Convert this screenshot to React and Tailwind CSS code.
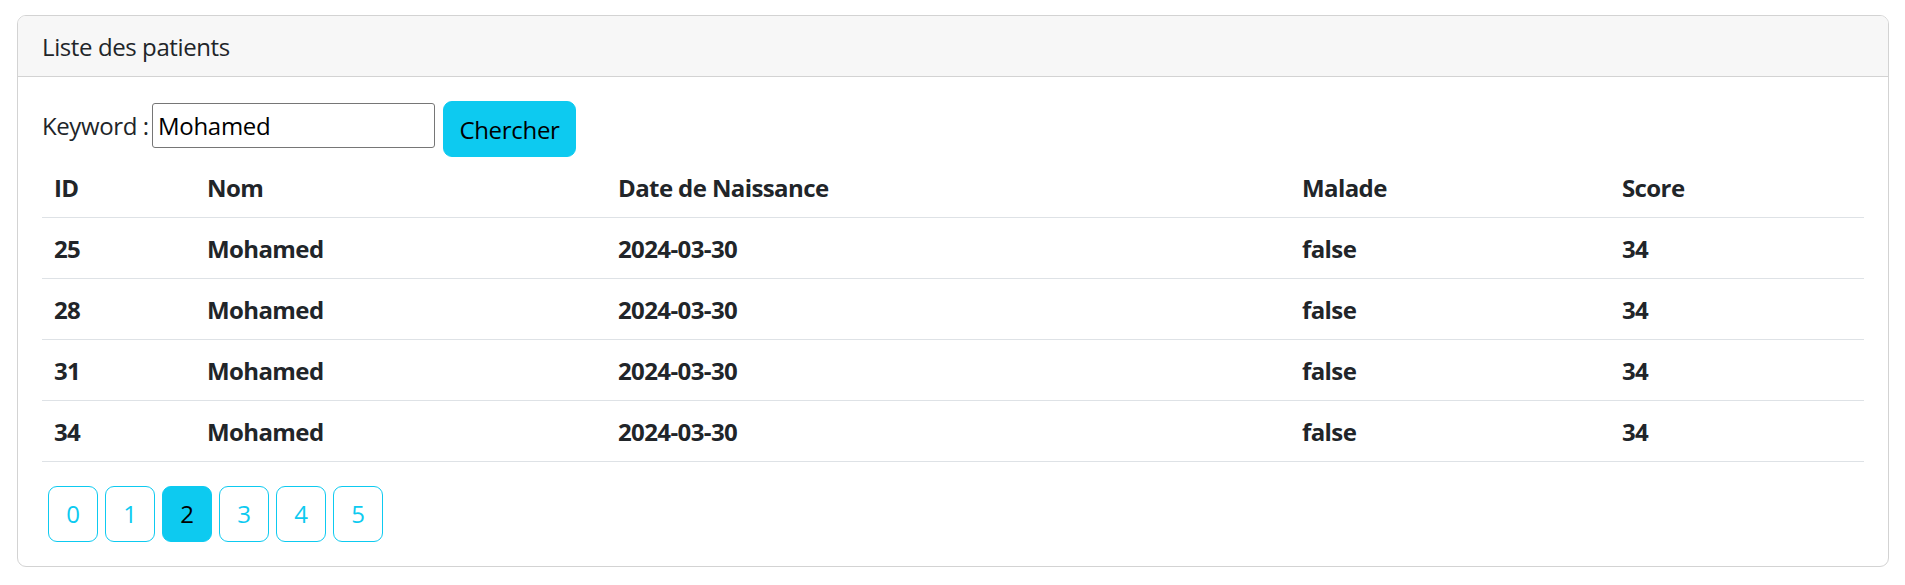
import React from "react";

const patients = [
    { id: 25, nom: "Mohamed", dateNaissance: "2024-03-30", malade: "false", score: 34 },
    { id: 28, nom: "Mohamed", dateNaissance: "2024-03-30", malade: "false", score: 34 },
    { id: 31, nom: "Mohamed", dateNaissance: "2024-03-30", malade: "false", score: 34 },
    { id: 34, nom: "Mohamed", dateNaissance: "2024-03-30", malade: "false", score: 34 },
];

const pages = [0, 1, 2, 3, 4, 5];
const currentPage = 2;

export default function App() {
    return (
        <div
            className="min-h-[585px] bg-white pt-[15px] pl-[17px] pr-[16px] text-[#212529]"
            style={{ fontFamily: '"Open Sans", "Noto Sans", sans-serif' }}
        >
            <div className="rounded-[9px] border border-[#d3d3d3] overflow-hidden">
                <div className="h-[61px] bg-[#f7f7f7] border-b border-[#d3d3d3] px-[24px] pt-[2px] flex items-center text-[24px] leading-[36px] tracking-[-0.4px]">
                    Liste des patients
                </div>
                <div className="p-[24px]">
                    <form className="flex items-start h-[56px]" onSubmit={(e) => e.preventDefault()}>
                        <label className="w-[110px] mt-[7px] text-[24px] leading-[36px] tracking-[-0.4px] whitespace-nowrap">
                            Keyword :
                        </label>
                        <input
                            type="text"
                            defaultValue="Mohamed"
                            className="mt-[2px] w-[283px] h-[45px] px-[5px] border border-[#767676] rounded-[3px] text-[24px] tracking-[-0.3px] text-black bg-white outline-none"
                        />
                        <button
                            type="submit"
                            className="ml-[8px] w-[133px] h-[56px] pt-[1px] rounded-[9px] bg-[#0dcaf0] border border-[#0dcaf0] text-[24px] leading-[36px] tracking-[-0.3px] text-black flex items-center justify-center"
                        >
                            Chercher
                        </button>
                    </form>
                    <table className="w-full table-fixed border-collapse text-[24px] leading-[36px] font-bold tracking-[-0.6px]">
                        <colgroup>
                            <col className="w-[153px]" />
                            <col className="w-[411px]" />
                            <col className="w-[684px]" />
                            <col className="w-[320px]" />
                            <col />
                        </colgroup>
                        <thead>
                            <tr className="border-b border-[#dee2e6]">
                                <th className="px-[12px] pt-[13px] pb-[11px] text-left">ID</th>
                                <th className="px-[12px] pt-[13px] pb-[11px] text-left">Nom</th>
                                <th className="px-[12px] pt-[13px] pb-[11px] text-left">Date de Naissance</th>
                                <th className="px-[12px] pt-[13px] pb-[11px] text-left">Malade</th>
                                <th className="px-[12px] pt-[13px] pb-[11px] text-left">Score</th>
                            </tr>
                        </thead>
                        <tbody>
                            {patients.map((p) => (
                                <tr key={p.id} className="border-b border-[#dee2e6]">
                                    <td className="px-[12px] pt-[13px] pb-[11px]">{p.id}</td>
                                    <td className="px-[12px] pt-[13px] pb-[11px]">{p.nom}</td>
                                    <td className="px-[12px] pt-[13px] pb-[11px]">{p.dateNaissance}</td>
                                    <td className="px-[12px] pt-[13px] pb-[11px]">{p.malade}</td>
                                    <td className="px-[12px] pt-[13px] pb-[11px]">{p.score}</td>
                                </tr>
                            ))}
                        </tbody>
                    </table>
                    <div className="mt-[24px] pl-[6px] flex gap-[7px]">
                        {pages.map((page) =>
                            page === currentPage ? (
                                <button
                                    key={page}
                                    className="w-[50px] h-[56px] rounded-[9px] border border-[#0dcaf0] bg-[#0dcaf0] text-black text-[24px] leading-[36px] flex items-center justify-center"
                                >
                                    {page}
                                </button>
                            ) : (
                                <button
                                    key={page}
                                    className="w-[50px] h-[56px] rounded-[9px] border border-[#0dcaf0] bg-white text-[#0dcaf0] text-[24px] leading-[36px] flex items-center justify-center"
                                >
                                    {page}
                                </button>
                            )
                        )}
                    </div>
                </div>
            </div>
        </div>
    );
}
